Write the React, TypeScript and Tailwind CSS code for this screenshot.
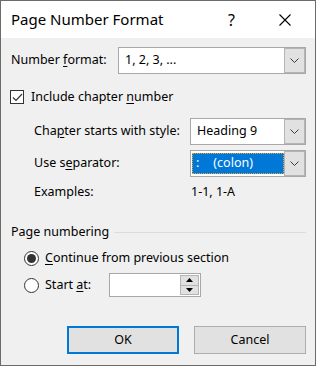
import React from "react";

const font = { fontFamily: '"Noto Sans", "Open Sans", sans-serif' };

function Chevron() {
  return (
    <svg width="9" height="5" viewBox="0 0 9 5" className="block">
      <path d="M0.5 0.5 L4.5 4.5 L8.5 0.5" fill="none" stroke="#3c3c3c" strokeWidth="1" />
    </svg>
  );
}

function Combo({ value, selected, width }: { value: React.ReactNode; selected?: boolean; width: string }) {
  return (
    <div className={`flex h-[27px] ${width} border border-[#a8a8a8] bg-white`}>
      <div className="flex flex-1 items-center min-w-0">
        {selected ? (
          <div className="ml-[1px] flex h-[21px] flex-1 items-center border border-dotted border-[#f5a623] bg-[#0078d7] pl-[3px] text-white">
            {value}
          </div>
        ) : (
          <div className="pl-[6px] text-[#000]">{value}</div>
        )}
      </div>
      <div className="flex w-[21px] items-center justify-center border border-[#b4b4b4] bg-[#e1e1e1]">
        <Chevron />
      </div>
    </div>
  );
}

function U({ children }: { children: React.ReactNode }) {
  return <span className="underline underline-offset-2">{children}</span>;
}

export default function App() {
  return (
    <div
      className="flex h-[366px] w-[316px] flex-col border border-[#6b6b6b] bg-[#f0f0f0] text-[12.5px] text-[#000]"
      style={font}
    >
      {/* title bar */}
      <div className="flex h-[37px] shrink-0 items-center bg-white">
        <div className="pl-[10px] text-[15px] text-[#000]">Page Number Format</div>
        <div className="ml-auto mr-[44px] text-[16px] text-[#000]">?</div>
        <svg width="12" height="12" viewBox="0 0 12 12" className="mr-[24px]">
          <path d="M0.5 0.5 L11.5 11.5 M11.5 0.5 L0.5 11.5" stroke="#000" strokeWidth="1.1" />
        </svg>
      </div>

      <div className="flex flex-1 flex-col pl-[10px] pr-[9px]">
        {/* number format */}
        <div className="mt-[9px] flex h-[27px] items-center">
          <div className="w-[107px]">
            Number <U>f</U>ormat:
          </div>
          <Combo value="1, 2, 3, ..." width="flex-1" />
        </div>

        {/* include chapter number */}
        <div className="mt-[14px] flex h-[18px] items-center">
          <div className="ml-[-1px] flex h-[14px] w-[14px] items-center justify-center border border-[#333] bg-white">
            <svg width="11" height="9" viewBox="0 0 11 9">
              <path d="M1 4.5 L4 7.5 L10 1" fill="none" stroke="#333" strokeWidth="1.2" />
            </svg>
          </div>
          <div className="ml-[7px]">
            Include chapter <U>n</U>umber
          </div>
        </div>

        {/* chapter starts with style */}
        <div className="mt-[12px] flex h-[27px] items-center pl-[23px]">
          <div className="w-[156px]">
            Cha<U>p</U>ter starts with style:
          </div>
          <Combo value="Heading 9" width="flex-1" />
        </div>

        {/* separator */}
        <div className="mt-[5px] flex h-[27px] items-center pl-[23px]">
          <div className="w-[156px]">
            Use s<U>e</U>parator:
          </div>
          <Combo
            selected
            value={
              <span>
                :<span className="ml-[14px]">(colon)</span>
              </span>
            }
            width="flex-1"
          />
        </div>

        {/* examples */}
        <div className="mt-[7px] flex h-[16px] items-center pl-[23px]">
          <div className="w-[157px]">Examples:</div>
          <div>1-1, 1-A</div>
        </div>

        {/* page numbering */}
        <div className="mt-[24px] flex h-[16px] items-center">
          <div>Page numbering</div>
          <div className="ml-[5px] h-px flex-1 bg-[#dcdcdc]" />
        </div>

        {/* continue */}
        <div className="mt-[8px] flex h-[20px] items-center pl-[13px]">
          <div className="flex h-[15px] w-[15px] items-center justify-center rounded-full border border-[#333] bg-white">
            <div className="h-[9px] w-[9px] rounded-full bg-[#333]" />
          </div>
          <div className="ml-[6px]">
            <U>C</U>ontinue from previous section
          </div>
        </div>

        {/* start at */}
        <div className="mt-[5px] flex h-[24px] items-center pl-[13px]">
          <div className="h-[15px] w-[15px] rounded-full border border-[#333] bg-white" />
          <div className="ml-[6px] w-[64px]">
            Start <U>a</U>t:
          </div>
          <div className="flex h-[24px] w-[92px] border border-[#a8a8a8] bg-white">
            <div className="flex-1" />
            <div className="my-[1px] mr-[1px] flex w-[19px] flex-col">
              <div className="flex flex-1 items-center justify-center border border-[#b4b4b4] bg-[#e1e1e1]">
                <svg width="7" height="4" viewBox="0 0 7 4">
                  <path d="M0 4 L3.5 0 L7 4 Z" fill="#000" />
                </svg>
              </div>
              <div className="flex flex-1 items-center justify-center border border-t-0 border-[#b4b4b4] bg-[#e1e1e1]">
                <svg width="7" height="4" viewBox="0 0 7 4">
                  <path d="M0 0 L3.5 4 L7 0 Z" fill="#000" />
                </svg>
              </div>
            </div>
          </div>
        </div>

        {/* buttons */}
        <div className="mt-[29px] flex h-[28px] justify-end gap-[15px]">
          <div className="flex w-[112px] items-center justify-center border-2 border-[#0078d7] bg-[#e1e1e1]">
            OK
          </div>
          <div className="flex w-[112px] items-center justify-center border border-[#adadad] bg-[#e1e1e1]">
            Cancel
          </div>
        </div>
      </div>
    </div>
  );
}
